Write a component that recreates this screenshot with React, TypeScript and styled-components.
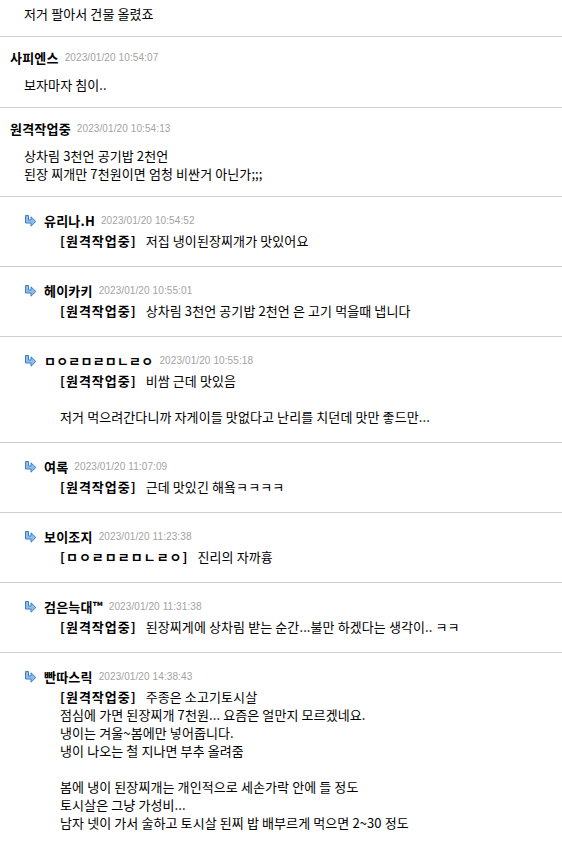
import React from "react";
import styled, { createGlobalStyle } from "styled-components";

const GlobalStyle = createGlobalStyle`
  html, body { margin: 0; padding: 0; background: #fff; }
  body {
    font-family: "Noto Sans CJK KR", "Noto Sans", sans-serif;
    font-size: 13px;
    color: #000;
  }
`;

const List = styled.div`
  width: 562px;
`;

const Item = styled.div<{ $reply?: boolean; $partial?: boolean }>`
  border-top: ${(p) => (p.$partial ? "none" : "1px solid #cfcfcf")};
  padding: ${(p) =>
    p.$partial ? "5px 0 13px 10px" : p.$reply ? "14px 0 16px 24px" : "11px 0 13px 10px"};
`;

const Header = styled.div`
  display: flex;
  align-items: center;
  height: 18px;
`;

const Arrow = styled.svg`
  width: 13px;
  height: 13px;
  margin-right: 7px;
  flex: none;
`;

const Name = styled.span`
  font-weight: 700;
  font-size: 13px;
  letter-spacing: 0.2px;
  color: #000;
`;

const Time = styled.span`
  font-family: "Liberation Sans", Arial, sans-serif;
  font-size: 10px;
  letter-spacing: 0.1px;
  color: #a3a3a3;
  margin-left: 6px;
`;

const Body = styled.div<{ $reply?: boolean; $partial?: boolean }>`
  margin-top: ${(p) => (p.$partial ? "0" : p.$reply ? "3px" : "10px")};
  padding-left: ${(p) => (p.$reply ? "36px" : "14px")};
  line-height: 18px;
  letter-spacing: 0.1px;
`;

const Line = styled.div`
  height: 18px;
  white-space: pre;
`;

const Mention = styled.span`
  font-weight: 700;
  letter-spacing: 1px;
  margin-right: 9px;
`;

const ReplyArrow = () => (
  <Arrow viewBox="0 0 13 13">
    <path
      d="M1.5 1.5 H4.5 V6 H7 V2.8 L11.8 7.5 L7 12.2 V9 H1.5 Z"
      fill="#8dbdea"
      stroke="#3f7fc8"
      strokeWidth="1"
      strokeLinejoin="miter"
    />
  </Arrow>
);

type C = {
  name?: string;
  time?: string;
  reply?: boolean;
  mention?: string;
  text: string;
  partial?: boolean;
};

const comments: C[] = [
  { partial: true, text: "저거 팔아서 건물 올렸죠" },
  { name: "사피엔스", time: "2023/01/20 10:54:07", text: "보자마자 침이.." },
  {
    name: "원격작업중",
    time: "2023/01/20 10:54:13",
    text: "상차림 3천언 공기밥 2천언\n된장 찌개만 7천원이면 엄청 비싼거 아닌가;;;",
  },
  { name: "유리나.H", time: "2023/01/20 10:54:52", reply: true, mention: "원격작업중", text: "저집 냉이된장찌개가 맛있어요" },
  {
    name: "헤이카키",
    time: "2023/01/20 10:55:01",
    reply: true,
    mention: "원격작업중",
    text: "상차림 3천언 공기밥 2천언 은 고기 먹을때 냅니다",
  },
  {
    name: "ㅁㅇㄹㅁㄹㅁㄴㄹㅇ",
    time: "2023/01/20 10:55:18",
    reply: true,
    mention: "원격작업중",
    text: "비쌈 근데 맛있음\n\n저거 먹으려간다니까 자게이들 맛없다고 난리를 치던데 맛만 좋드만...",
  },
  { name: "여록", time: "2023/01/20 11:07:09", reply: true, mention: "원격작업중", text: "근데 맛있긴 해욬ㅋㅋㅋㅋ" },
  { name: "보이조지", time: "2023/01/20 11:23:38", reply: true, mention: "ㅁㅇㄹㅁㄹㅁㄴㄹㅇ", text: "진리의 자까흉" },
  {
    name: "검은늑대™",
    time: "2023/01/20 11:31:38",
    reply: true,
    mention: "원격작업중",
    text: "된장찌게에 상차림 받는 순간...불만 하겠다는 생각이.. ㅋㅋ",
  },
  {
    name: "빤따스릭",
    time: "2023/01/20 14:38:43",
    reply: true,
    mention: "원격작업중",
    text:
      "주종은 소고기토시살\n점심에 가면 된장찌개 7천원... 요즘은 얼만지 모르겠네요.\n냉이는 겨울~봄에만 넣어줍니다.\n냉이 나오는 철 지나면 부추 올려줌\n\n봄에 냉이 된장찌개는 개인적으로 세손가락 안에 들 정도\n토시살은 그냥 가성비...\n남자 넷이 가서 술하고 토시살 된찌 밥 배부르게 먹으면 2~30 정도",
  },
];

export default function App() {
  return (
    <>
      <GlobalStyle />
      <List>
        {comments.map((c, i) => (
          <Item key={i} $reply={c.reply} $partial={c.partial}>
            {c.name && (
              <Header>
                {c.reply && <ReplyArrow />}
                <Name>{c.name}</Name>
                <Time>{c.time}</Time>
              </Header>
            )}
            <Body $reply={c.reply} $partial={c.partial}>
              {c.text.split("\n").map((ln, j) => (
                <Line key={j}>
                  {j === 0 && c.mention && <Mention>[{c.mention}]</Mention>}
                  {ln}
                </Line>
              ))}
            </Body>
          </Item>
        ))}
      </List>
    </>
  );
}
